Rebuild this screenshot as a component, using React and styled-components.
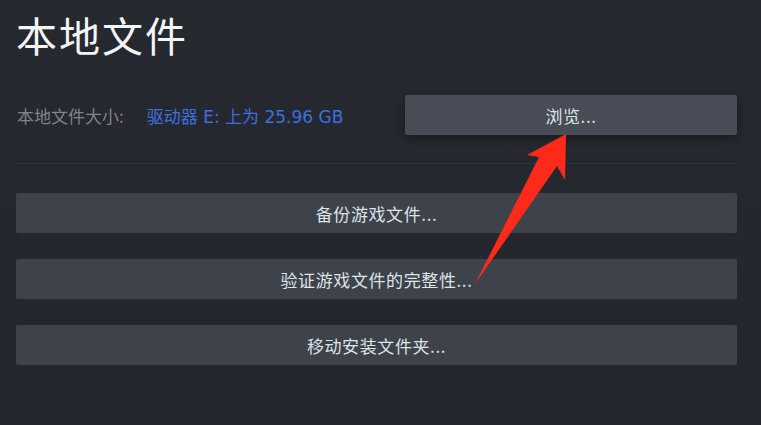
import React from "react";
import styled, { createGlobalStyle } from "styled-components";

const Global = createGlobalStyle`
  html, body { margin: 0; padding: 0; background: #24272e; }
  body { font-family: "Noto Sans CJK SC", "Noto Sans", sans-serif; }
`;

const Page = styled.div`
  position: relative;
  width: 761px;
  height: 425px;
  box-sizing: border-box;
  padding: 0 24px 0 16px;
  background: linear-gradient(180deg, #262930 0%, #23262d 100%);
  overflow: hidden;
`;

const Title = styled.h1`
  margin: 0;
  padding: 12px 0 0 0;
  font-size: 41px;
  line-height: 45px;
  font-weight: 400;
  letter-spacing: 2px;
  color: #f4f5f6;
`;

const SizeRow = styled.div`
  display: flex;
  align-items: center;
  margin-top: 38px;
  height: 40px;
`;

const SizeInfo = styled.div`
  flex: 1;
  display: flex;
  align-items: center;
  gap: 23px;
  padding-left: 1px;
  font-size: 17px;
`;

const Label = styled.span`
  color: #80848c;
`;

const Drive = styled.span`
  font-family: "DejaVu Sans", "Noto Sans CJK SC", sans-serif;
  color: #3d6fe0;
`;

const ActionButton = styled.div`
  display: flex;
  align-items: center;
  justify-content: center;
  height: 40px;
  width: ${(p) => (p.$w ? `${p.$w}px` : "auto")};
  box-sizing: border-box;
  border-radius: 2px;
  background: ${(p) => (p.$primary ? "#474c57" : "#3d424b")};
  box-shadow: ${(p) => (p.$primary ? "0 4px 10px rgba(0,0,0,0.35)" : "none")};
  color: #dde3e7;
  font-size: 17px;
  letter-spacing: 0.6px;
`;

const Divider = styled.div`
  margin-top: 28px;
  height: 1px;
  background: #30333b;
`;

const ButtonList = styled.div`
  display: flex;
  flex-direction: column;
  gap: 26px;
  margin-top: 29px;
`;

const ArrowLayer = styled.svg`
  position: absolute;
  left: 0;
  top: 0;
  pointer-events: none;
`;

export default function App() {
  return (
    <>
      <Global />
      <Page>
        <Title>本地文件</Title>
        <SizeRow>
          <SizeInfo>
            <Label>本地文件大小:</Label>
            <Drive>驱动器 E: 上为 25.96 GB</Drive>
          </SizeInfo>
          <ActionButton $primary $w={332}>浏览...</ActionButton>
        </SizeRow>
        <Divider />
        <ButtonList>
          <ActionButton>备份游戏文件...</ActionButton>
          <ActionButton>验证游戏文件的完整性...</ActionButton>
          <ActionButton>移动安装文件夹...</ActionButton>
        </ButtonList>
        <ArrowLayer width="761" height="425" viewBox="0 0 761 425">
          <polygon
            points="566,134 527,155 539,157 475,284 557,166 565,180"
            fill="#ff2a1a"
          />
        </ArrowLayer>
      </Page>
    </>
  );
}
